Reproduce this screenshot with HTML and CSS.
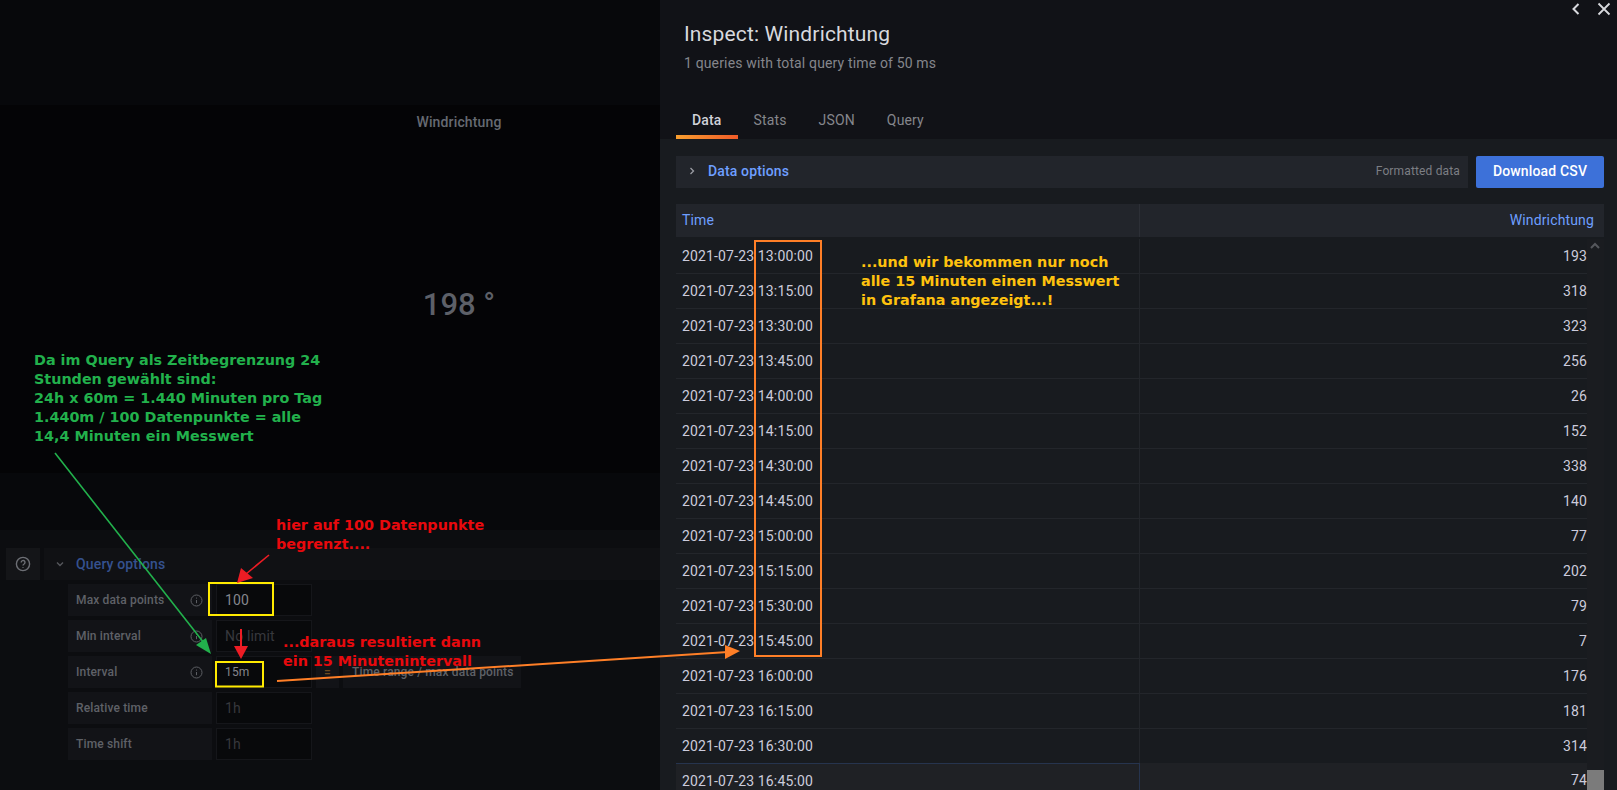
FILE: index.html
```html
<!DOCTYPE html>
<html>
<head>
    <title>Inspect: Windrichtung</title>
    <link rel="stylesheet" href="styles.css">
</head>
<body>
    <div class="page">
        <div class="left">
            <div class="top-strip"></div>
            <div class="panel">
                <div class="panel-title">Windrichtung</div>
                <div class="panel-value">198 °</div>
            </div>
            <div class="mid-strip"></div>
            <div class="query-area">
                <div class="query-head">
                    <div class="help-box">
                        <svg width="16" height="16" viewBox="0 0 16 16" fill="none" stroke="#6d6f75" stroke-width="1.4"><circle cx="8" cy="8" r="6.6"/><path d="M6.2 6.4a1.9 1.9 0 1 1 2.9 1.6c-.7.4-1.1.8-1.1 1.4"/><path d="M8 11.2v.9"/></svg>
                    </div>
                    <div class="query-bar">
                        <svg class="chev-down" width="10" height="10" viewBox="0 0 10 10" fill="none" stroke="#55575c" stroke-width="1.4"><path d="M2 3.5l3 3 3-3"/></svg>
                        <span>Query options</span>
                    </div>
                </div>
                <div class="opt-row">
                    <div class="opt-label">Max data points <svg class="info" width="13" height="13" viewBox="0 0 13 13" fill="none" stroke="#5c5e63"><circle cx="6.5" cy="6.5" r="5.5"/><path d="M6.5 6v3.2M6.5 3.6v1"/></svg></div>
                    <div class="opt-input val">100</div>
                </div>
                <div class="opt-row">
                    <div class="opt-label">Min interval <svg class="info" width="13" height="13" viewBox="0 0 13 13" fill="none" stroke="#5c5e63"><circle cx="6.5" cy="6.5" r="5.5"/><path d="M6.5 6v3.2M6.5 3.6v1"/></svg></div>
                    <div class="opt-input">No limit</div>
                </div>
                <div class="opt-row">
                    <div class="opt-label">Interval <svg class="info" width="13" height="13" viewBox="0 0 13 13" fill="none" stroke="#5c5e63"><circle cx="6.5" cy="6.5" r="5.5"/><path d="M6.5 6v3.2M6.5 3.6v1"/></svg></div>
                    <div class="opt-input small">15m</div>
                    <div class="eq-box">=</div>
                    <div class="range-box">Time range / max data points</div>
                </div>
                <div class="opt-row">
                    <div class="opt-label">Relative time</div>
                    <div class="opt-input">1h</div>
                </div>
                <div class="opt-row">
                    <div class="opt-label">Time shift</div>
                    <div class="opt-input">1h</div>
                </div>
            </div>
        </div>

        <div class="drawer">
            <div class="drawer-head">
                <div class="head-icons">
                    <svg width="12" height="14" viewBox="0 0 12 14" fill="none" stroke="#d8d9de" stroke-width="2"><path d="M8.5 2L3.5 7l5 5"/></svg>
                    <svg width="14" height="14" viewBox="0 0 14 14" fill="none" stroke="#d8d9de" stroke-width="1.8"><path d="M1.5 1.5l11 11M12.5 1.5l-11 11"/></svg>
                </div>
                <div class="drawer-title">Inspect: Windrichtung</div>
                <div class="drawer-sub">1 queries with total query time of 50 ms</div>
                <div class="tabs">
                    <div class="tab active">Data</div>
                    <div class="tab">Stats</div>
                    <div class="tab">JSON</div>
                    <div class="tab">Query</div>
                </div>
            </div>
            <div class="drawer-body">
                <div class="toolbar">
                    <div class="options-bar">
                        <svg width="10" height="10" viewBox="0 0 10 10" fill="none" stroke="#9a9ca3" stroke-width="1.3"><path d="M3.5 2l3 3-3 3"/></svg>
                        <span class="options-text">Data options</span>
                        <span class="formatted">Formatted data</span>
                    </div>
                    <div class="csv-btn">Download CSV</div>
                </div>
                <div class="table-head">
                    <div class="th-time">Time</div>
                    <div class="th-val">Windrichtung</div>
                </div>
                <div class="table-wrap">
                    <div class="rows">
                        <div class="row"><div class="c-time">2021-07-23 13:00:00</div><div class="c-val">193</div></div>
                        <div class="row"><div class="c-time">2021-07-23 13:15:00</div><div class="c-val">318</div></div>
                        <div class="row"><div class="c-time">2021-07-23 13:30:00</div><div class="c-val">323</div></div>
                        <div class="row"><div class="c-time">2021-07-23 13:45:00</div><div class="c-val">256</div></div>
                        <div class="row"><div class="c-time">2021-07-23 14:00:00</div><div class="c-val">26</div></div>
                        <div class="row"><div class="c-time">2021-07-23 14:15:00</div><div class="c-val">152</div></div>
                        <div class="row"><div class="c-time">2021-07-23 14:30:00</div><div class="c-val">338</div></div>
                        <div class="row"><div class="c-time">2021-07-23 14:45:00</div><div class="c-val">140</div></div>
                        <div class="row"><div class="c-time">2021-07-23 15:00:00</div><div class="c-val">77</div></div>
                        <div class="row"><div class="c-time">2021-07-23 15:15:00</div><div class="c-val">202</div></div>
                        <div class="row"><div class="c-time">2021-07-23 15:30:00</div><div class="c-val">79</div></div>
                        <div class="row"><div class="c-time">2021-07-23 15:45:00</div><div class="c-val">7</div></div>
                        <div class="row"><div class="c-time">2021-07-23 16:00:00</div><div class="c-val">176</div></div>
                        <div class="row"><div class="c-time">2021-07-23 16:15:00</div><div class="c-val">181</div></div>
                        <div class="row"><div class="c-time">2021-07-23 16:30:00</div><div class="c-val">314</div></div>
                        <div class="row hover"><div class="c-time">2021-07-23 16:45:00</div><div class="c-val">74</div></div>
                    </div>
                    <div class="scroll-track">
                        <svg class="scroll-up" width="12" height="8" viewBox="0 0 12 8" fill="none" stroke="#55575c" stroke-width="2"><path d="M2 6l4-4 4 4"/></svg>
                        <div class="scroll-thumb"></div>
                    </div>
                </div>
            </div>
        </div>
    </div>

    <!-- annotations drawn on top of the screenshot -->
    <svg class="marks" width="1617" height="790" viewBox="0 0 1617 790" fill="none">
        <rect x="209" y="583" width="64" height="32" stroke="#ffea00" stroke-width="2"/>
        <rect x="216" y="662" width="47" height="24.5" stroke="#ffea00" stroke-width="2"/>
        <rect x="755" y="241" width="66" height="415" stroke="#ff7f27" stroke-width="2"/>

        <path d="M55 453L204 643" stroke="#22b14c" stroke-width="1.6"/>
        <path d="M211 654L196 645L206 638Z" fill="#22b14c"/>

        <path d="M269 555L246 574" stroke="#ed1c24" stroke-width="1.6"/>
        <path d="M237 583L241 568L253 578Z" fill="#ed1c24"/>

        <path d="M241 629V648" stroke="#ed1c24" stroke-width="2"/>
        <path d="M241 659L234 646H248Z" fill="#ed1c24"/>

        <path d="M277 681L728 652" stroke="#ff7f27" stroke-width="2"/>
        <path d="M740 651L725 645V659Z" fill="#ff7f27"/>
    </svg>

    <div class="note note-green">Da im Query als Zeitbegrenzung 24<br>Stunden gewählt sind:<br>24h x 60m = 1.440 Minuten pro Tag<br>1.440m / 100 Datenpunkte = alle<br>14,4 Minuten ein Messwert</div>
    <div class="note note-red-a">hier auf 100 Datenpunkte<br>begrenzt....</div>
    <div class="note note-red-b">...daraus resultiert dann<br>ein 15 Minutenintervall</div>
    <div class="note note-yellow">...und wir bekommen nur noch<br>alle 15 Minuten einen Messwert<br>in Grafana angezeigt...!</div>
</body>
</html>
```

FILE: styles.css
```css
html, body {
    margin: 0;
    height: 790px;
    overflow: hidden;
}

body {
    position: relative;
    background: #07080b;
    font-family: Roboto, "Liberation Sans", sans-serif;
    font-size: 14px;
    letter-spacing: 0.15px;
    color: #ccccdc;
}

.page {
    display: flex;
    height: 790px;
}

/* left side, dimmed dashboard */
.left {
    width: 660px;
    flex: none;
    display: flex;
    flex-direction: column;
}

.top-strip {
    height: 105px;
    background: #07080b;
}

/* the panel runs on under the drawer, so its text centres further right */
.panel {
    height: 368px;
    box-sizing: border-box;
    padding-left: 258px;
    background: #040406;
    text-align: center;
    color: #666a72;
    font-weight: 500;
}

.panel-title {
    padding-top: 9px;
    line-height: 16px;
}

.panel-value {
    margin-top: 156px;
    font-size: 31px;
    line-height: 38px;
    letter-spacing: 0;
    color: #5d6068;
}

.mid-strip {
    height: 57px;
    background: #07080b;
}

.query-area {
    flex: 1;
    background: #0c0d10;
    padding-top: 18px;
}

.query-head {
    display: flex;
    gap: 4px;
    height: 32px;
    padding-left: 6px;
    margin-bottom: 4px;
}

.help-box {
    width: 34px;
    background: #141518;
    display: flex;
    align-items: center;
    justify-content: center;
}

.query-bar {
    flex: 1;
    background: #101114;
    display: flex;
    align-items: center;
    gap: 11px;
    padding-left: 11px;
    color: #35518f;
    font-weight: 500;
}

.opt-row {
    display: flex;
    height: 32px;
    margin-bottom: 4px;
    margin-left: 68px;
    gap: 4px;
}

.opt-label {
    width: 144px;
    box-sizing: border-box;
    background: #121317;
    padding-left: 8px;
    display: flex;
    align-items: center;
    justify-content: space-between;
    padding-right: 9px;
    font-size: 12px;
    font-weight: 500;
    color: #5f6167;
}

.opt-input {
    width: 96px;
    box-sizing: border-box;
    background: #08090b;
    border: 1px solid #15161a;
    padding-left: 8px;
    display: flex;
    align-items: center;
    color: #37383d;
}

.opt-input.val {
    color: #85868d;
}

.opt-input.small {
    font-size: 12px;
    color: #85868c;
}

.eq-box {
    width: 23px;
    background: #121317;
    color: #6b4a1e;
    display: flex;
    align-items: center;
    justify-content: center;
    font-size: 12px;
    font-weight: 500;
}

.range-box {
    width: 178px;
    box-sizing: border-box;
    background: #121317;
    color: #5f6167;
    display: flex;
    align-items: center;
    padding-left: 9px;
    font-size: 12px;
    font-weight: 500;
}

/* inspect drawer */
.drawer {
    flex: 1;
    display: flex;
    flex-direction: column;
    background: #181b1f;
    min-width: 0;
}

.drawer-head {
    height: 139px;
    box-sizing: border-box;
    background: #111217;
    padding: 22px 0 0 16px;
    position: relative;
}

.head-icons {
    position: absolute;
    top: 2px;
    right: 6px;
    display: flex;
    gap: 15px;
}

.drawer-title {
    padding-left: 8px;
    font-size: 21px;
    line-height: 24px;
    color: #d8d9de;
}

.drawer-sub {
    padding-left: 8px;
    margin-top: 7px;
    line-height: 20px;
    color: #85868c;
}

.tabs {
    display: flex;
    margin-top: 27px;
}

.tab {
    height: 39px;
    box-sizing: border-box;
    padding: 0 16px;
    line-height: 41px;
    color: #85868c;
}

.tab.active {
    font-weight: 500;
    color: #d0d1d8;
    border-bottom: 4px solid #f7693a;
    border-image: linear-gradient(90deg, #f99f2f, #f05a28) 1;
    border-radius: 2px;
}

.drawer-body {
    flex: 1;
    padding: 17px 13px 0 16px;
    min-height: 0;
}

.toolbar {
    display: flex;
    gap: 8px;
    height: 32px;
}

.options-bar {
    flex: 1;
    background: #22252b;
    display: flex;
    align-items: center;
    padding: 0 8px 2px 11px;
}

.options-text {
    margin-left: 11px;
    font-weight: 500;
    color: #6e9fff;
}

.formatted {
    margin-left: auto;
    font-size: 12px;
    color: #7c7e84;
}

.csv-btn {
    width: 128px;
    background: #3d71d9;
    border-radius: 2px;
    color: #fff;
    font-weight: 500;
    text-align: center;
    line-height: 31px;
}

.table-head {
    display: flex;
    height: 33px;
    margin-top: 16px;
    background: #22252b;
    line-height: 32px;
    color: #6e9fff;
}

.th-time {
    width: 464px;
    padding-left: 6px;
    border-right: 1px solid #2c2f36;
    box-sizing: border-box;
}

.th-val {
    flex: 1;
    text-align: right;
    padding-right: 10px;
}

.table-wrap {
    display: flex;
    margin-top: 2px;
    height: 560px;
    overflow: hidden;
}

.rows {
    flex: 1;
}

.row {
    display: flex;
    height: 35px;
    box-sizing: border-box;
    border-bottom: 1px solid #23262b;
    line-height: 34px;
}

.c-time {
    width: 464px;
    box-sizing: border-box;
    padding-left: 6px;
    border-right: 1px solid #23262b;
}

.c-val {
    flex: 1;
    text-align: right;
}

.row.hover {
    background: #1f2125;
    margin-top: -1px;
    height: 36px;
    line-height: 34px;
}

.row.hover .c-time {
    border-top: 1px solid #26344e;
    border-right: 1px solid #26344e;
}

.scroll-track {
    width: 17px;
    background: #1a1c20;
    position: relative;
}

.scroll-up {
    position: absolute;
    top: 3px;
    left: 2px;
}

.scroll-thumb {
    position: absolute;
    top: 531px;
    left: 0;
    width: 17px;
    height: 20px;
    background: #7b7b7b;
}

/* overlays */
.marks {
    position: absolute;
    left: 0;
    top: 0;
}

.note {
    position: absolute;
    font-family: "DejaVu Sans", sans-serif;
    font-weight: bold;
    font-size: 14.35px;
    letter-spacing: 0;
    line-height: 19px;
    white-space: nowrap;
}

.note-green {
    left: 34px;
    top: 351px;
    color: #22b14c;
}

.note-red-a {
    left: 276px;
    top: 516px;
    color: #e8090d;
}

.note-red-b {
    left: 283px;
    top: 633px;
    color: #e8090d;
}

.note-yellow {
    left: 861px;
    top: 253px;
    color: #ffc20e;
}
```
